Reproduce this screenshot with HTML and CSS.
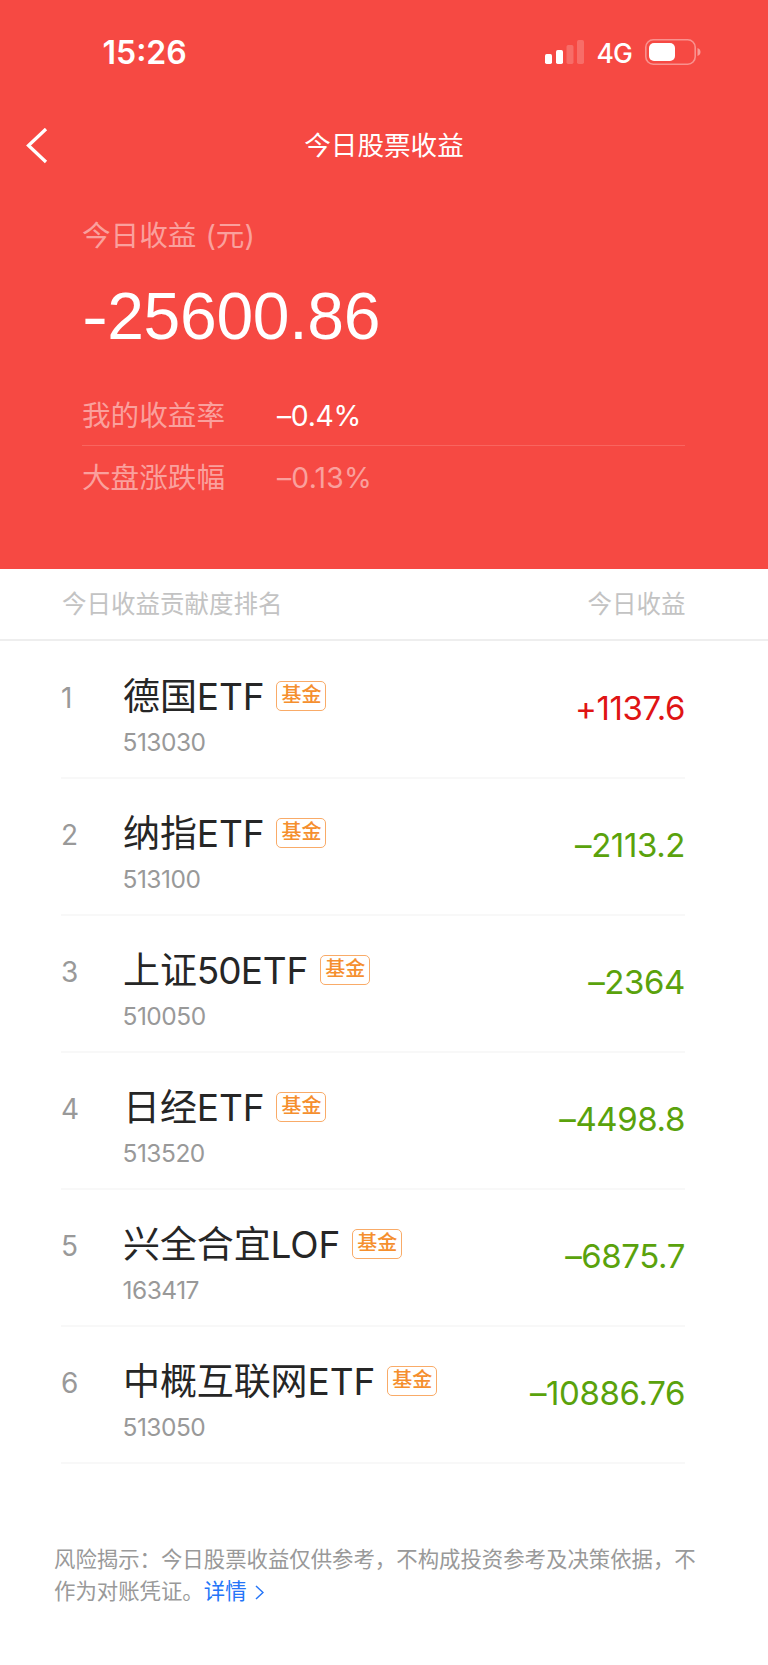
FILE: index.html
```html
<!DOCTYPE html>
<html lang="zh-CN">
<head>
<meta charset="utf-8">
<title>今日股票收益</title>
<link rel="stylesheet" href="styles.css">
</head>
<body>
<header class="hero">
  <div class="status">
    <span class="time">15:26</span>
    <div class="status-icons">
      <svg class="signal" width="40" height="26" viewBox="0 0 40 26" fill="#fff"><rect x="0" y="15" width="7" height="10" rx="1.7"/><rect x="11" y="11" width="7" height="14" rx="1.7"/><rect x="21.500" y="6" width="7" height="19" rx="1.700" opacity=".2"/><rect x="32" y="1" width="7" height="24" rx="1.700" opacity=".2"/></svg>
      <span class="network">4G</span>
      <svg class="battery" width="56" height="26" viewBox="0 0 56 26"><rect x=".8" y=".8" width="49.400" height="24.400" rx="7.500" fill="none" stroke="#fff" stroke-opacity=".4" stroke-width="1.600"/><rect x="4" y="4" width="26" height="18" rx="5" fill="#fff"/><path d="M52.500 9q3 1.200 3 4t-3 4z" fill="#fff" opacity=".45"/></svg>
    </div>
  </div>
  <nav class="nav">
    <svg class="back" width="22" height="36" viewBox="0 0 22 36" fill="none" stroke="#fff" stroke-width="3.300"><path d="M20 1 2.500 17.500 20 34"/></svg>
    <h1 class="title">今日股票收益</h1>
  </nav>
  <section class="summary">
    <div class="label">今日收益<span class="unit">(元)</span></div>
    <div class="total"><span class="sign">-</span>25600.86</div>
    <div class="rate mine"><span class="label">我的收益率</span><span class="rate-value">–0.4%</span></div>
    <div class="rate"><span class="label">大盘涨跌幅</span><span class="rate-value">–0.13%</span></div>
  </section>
</header>
<main>
  <div class="list-head"><span>今日收益贡献度排名</span><span>今日收益</span></div>
  <ol class="list">
    <li class="item"><span class="rank">1</span><div class="fund"><div class="name">德国ETF<span class="tag">基金</span></div><div class="code">513030</div></div><span class="amount up">+1137.6</span></li>
    <li class="item"><span class="rank">2</span><div class="fund"><div class="name">纳指ETF<span class="tag">基金</span></div><div class="code">513100</div></div><span class="amount">–2113.2</span></li>
    <li class="item"><span class="rank">3</span><div class="fund"><div class="name">上证<span class="digits">50</span>ETF<span class="tag">基金</span></div><div class="code">510050</div></div><span class="amount">–2364</span></li>
    <li class="item"><span class="rank">4</span><div class="fund"><div class="name">日经ETF<span class="tag">基金</span></div><div class="code">513520</div></div><span class="amount">–4498.8</span></li>
    <li class="item"><span class="rank">5</span><div class="fund"><div class="name">兴全合宜LOF<span class="tag">基金</span></div><div class="code">163417</div></div><span class="amount">–6875.7</span></li>
    <li class="item"><span class="rank">6</span><div class="fund"><div class="name">中概互联网ETF<span class="tag">基金</span></div><div class="code">513050</div></div><span class="amount">–10886.76</span></li>
  </ol>
</main>
<footer class="notice">风险揭示：今日股票收益仅供参考，不构成投资参考及决策依据，不作为对账凭证。<a class="more">详情<svg class="more-icon" width="9" height="15" viewBox="0 0 9 15" fill="none" stroke="currentColor" stroke-width="1.500"><path d="m1 1 7 6.500L1 14"/></svg></a></footer>
</body>
</html>
```
FILE: styles.css
```css
* { box-sizing: border-box; }
body {
  margin: 0;
  height: 1665px;
  background: #fff;
  font-family: Inter, "Noto Sans CJK SC", sans-serif;
  font-weight: 400;
  color: #262626;
}
.hero { height: 568.5px; background: #f64943; color: #fff; }
.status {
  height: 104px;
  padding: 0 67px 0 102.5px;
  display: flex;
  align-items: center;
  justify-content: space-between;
}
.time { font-size: 32px; font-weight: 600; }
.status-icons { display: flex; align-items: center; }
.network { margin: 2px 13px 0 11px; font-size: 26.5px; font-weight: 450; letter-spacing: -0.8px; }
.nav {
  height: 83px;
  padding: 0 26px;
  display: grid;
  grid-template-columns: 22px 1fr 22px;
  align-items: center;
}
.title { margin: 0; font-size: 26.6px; font-weight: 400; text-align: center; line-height: 39px; }
.summary { padding: 29px 83px 0 82px; }
.label { font-size: 28.6px; line-height: 40px; color: #faa09d; }
.unit { margin-left: 9px; }
.total {
  margin-top: 20px;
  font: 66px/80px "Liberation Sans", Arial, sans-serif;
  letter-spacing: -0.3px;
}
.sign {
  display: inline-block;
  margin-right: 3.5px;
  transform: scaleX(1.18);
  transform-origin: left;
}
.rate { height: 61px; padding-top: 2px; display: flex; align-items: center; }
.mine { margin-top: 29px; border-bottom: 1px solid #f9655f; }
.rate .label { width: 195px; }
.rate-value { font-size: 28.3px; font-weight: 380; letter-spacing: 0.2px; color: #faa09d; }
.mine .rate-value { letter-spacing: -0.3px; color: #fff; }
.list-head {
  height: 72px;
  padding: 0 82.5px 0 62px;
  display: flex;
  align-items: center;
  justify-content: space-between;
  font-size: 24.5px;
  line-height: 36px;
  color: #c3c3c3;
  border-bottom: 2px solid #eee;
}
.list { list-style: none; margin: 0; padding: 1px 83px 0 61px; }
.item {
  height: 137.1px;
  display: grid;
  grid-template-columns: 62px 1fr auto;
  border-bottom: 2px solid #f8f8f8;
}
.rank { padding-top: 39.5px; font-size: 28px; line-height: 34px; font-weight: 380; color: #999; }
.fund { padding-top: 29px; }
.name { display: flex; align-items: center; font-size: 37px; line-height: 52px; letter-spacing: -0.1px; }
.digits { letter-spacing: -1px; }
.tag {
  width: 50px;
  height: 30px;
  margin: 0 0 2px 12px;
  border: 1.5px solid #f9ab68;
  border-radius: 5px;
  font-size: 20px;
  line-height: 27px;
  letter-spacing: 0;
  text-align: center;
  font-weight: 500;
  color: #f58f2e;
}
.code { margin: 4.5px 0 0 -0.5px; font-size: 24.5px; line-height: 30px; font-weight: 380; letter-spacing: -0.5px; color: #999; }
.amount { padding-top: 46px; font-size: 33px; line-height: 40px; font-weight: 370; letter-spacing: -0.4px; color: #5aa20c; }
.up { color: #df1414; }
.notice {
  padding: 77.5px 60px 0 54px;
  font-size: 21.4px;
  line-height: 32px;
  font-family: "Noto Sans CJK SC", sans-serif;
  color: #999;
}
.more { color: #2475f8; }
.more-icon { margin-left: 8px; vertical-align: -1px; }
```
